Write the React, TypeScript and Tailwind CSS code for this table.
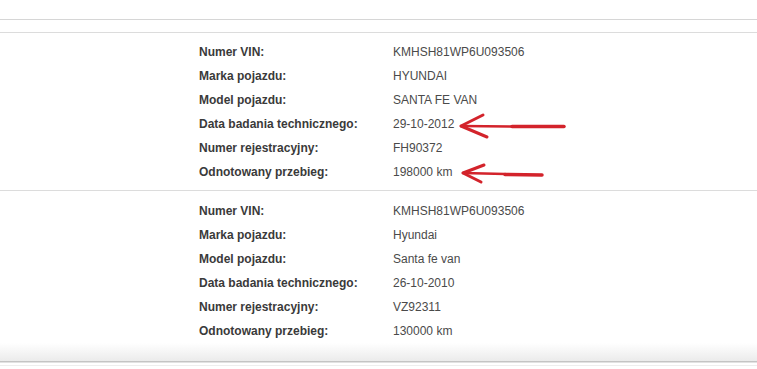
const inspections = [
  {
    vin: "KMHSH81WP6U093506",
    make: "HYUNDAI",
    model: "SANTA FE VAN",
    date: "29-10-2012",
    plate: "FH90372",
    mileage: "198000 km",
  },
  {
    vin: "KMHSH81WP6U093506",
    make: "Hyundai",
    model: "Santa fe van",
    date: "26-10-2010",
    plate: "VZ92311",
    mileage: "130000 km",
  },
];

const Row = ({ label, value }: { label: string; value: string }) => (
  <div className="flex h-6 items-center">
    <div className="w-[194px] font-bold text-[#3a3a3a]">{label}</div>
    <div className="text-[#4a4a4a]">{value}</div>
  </div>
);

export default function App() {
  return (
    <main
      className="relative h-[369px] w-[757px] overflow-hidden bg-white text-[12px]"
      style={{ fontFamily: '"Liberation Sans", Arial, sans-serif' }}
    >
      <div className="h-[19px]" />
      <div className="h-[13px] border-t border-[#d6d6d6] bg-white" />

      {inspections.map((item, i) => (
        <section key={i} className={`border-t border-[#dcdcdc] pl-[199px] ${i === 0 ? "pt-[7px] pb-[6px]" : "pt-[8px] pb-0"}`}>
          <Row label="Numer VIN:" value={item.vin} />
          <Row label="Marka pojazdu:" value={item.make} />
          <Row label="Model pojazdu:" value={item.model} />
          <Row label="Data badania technicznego:" value={item.date} />
          <Row label="Numer rejestracyjny:" value={item.plate} />
          <Row label="Odnotowany przebieg:" value={item.mileage} />
        </section>
      ))}

      <div className="h-[18px] bg-gradient-to-b from-white to-[#ebebeb]" />
      <div className="h-[2px] border-t border-[#c4c4c4] bg-[#e2e2e2]" />
      <div className="h-[3px] border-b border-[#eeeeee]" />

      {/* hand-drawn red arrows */}
      <svg className="pointer-events-none absolute left-0 top-0" width="757" height="369">
        <g fill="none" stroke="#d3232b" strokeLinecap="round" strokeLinejoin="round">
          <path d="M461 126 L483 115 M461 126 L487 137" strokeWidth="3" />
          <path d="M461 126 L512 126.5" strokeWidth="2.5" />
          <path d="M512 126.5 L564 126.5" strokeWidth="3.5" />
          <path d="M463 173 L484 165 M463 173 L481 182" strokeWidth="3" />
          <path d="M463 173 L505 174" strokeWidth="2.5" />
          <path d="M505 174.5 L542 175" strokeWidth="3.5" />
        </g>
      </svg>
    </main>
  );
}
